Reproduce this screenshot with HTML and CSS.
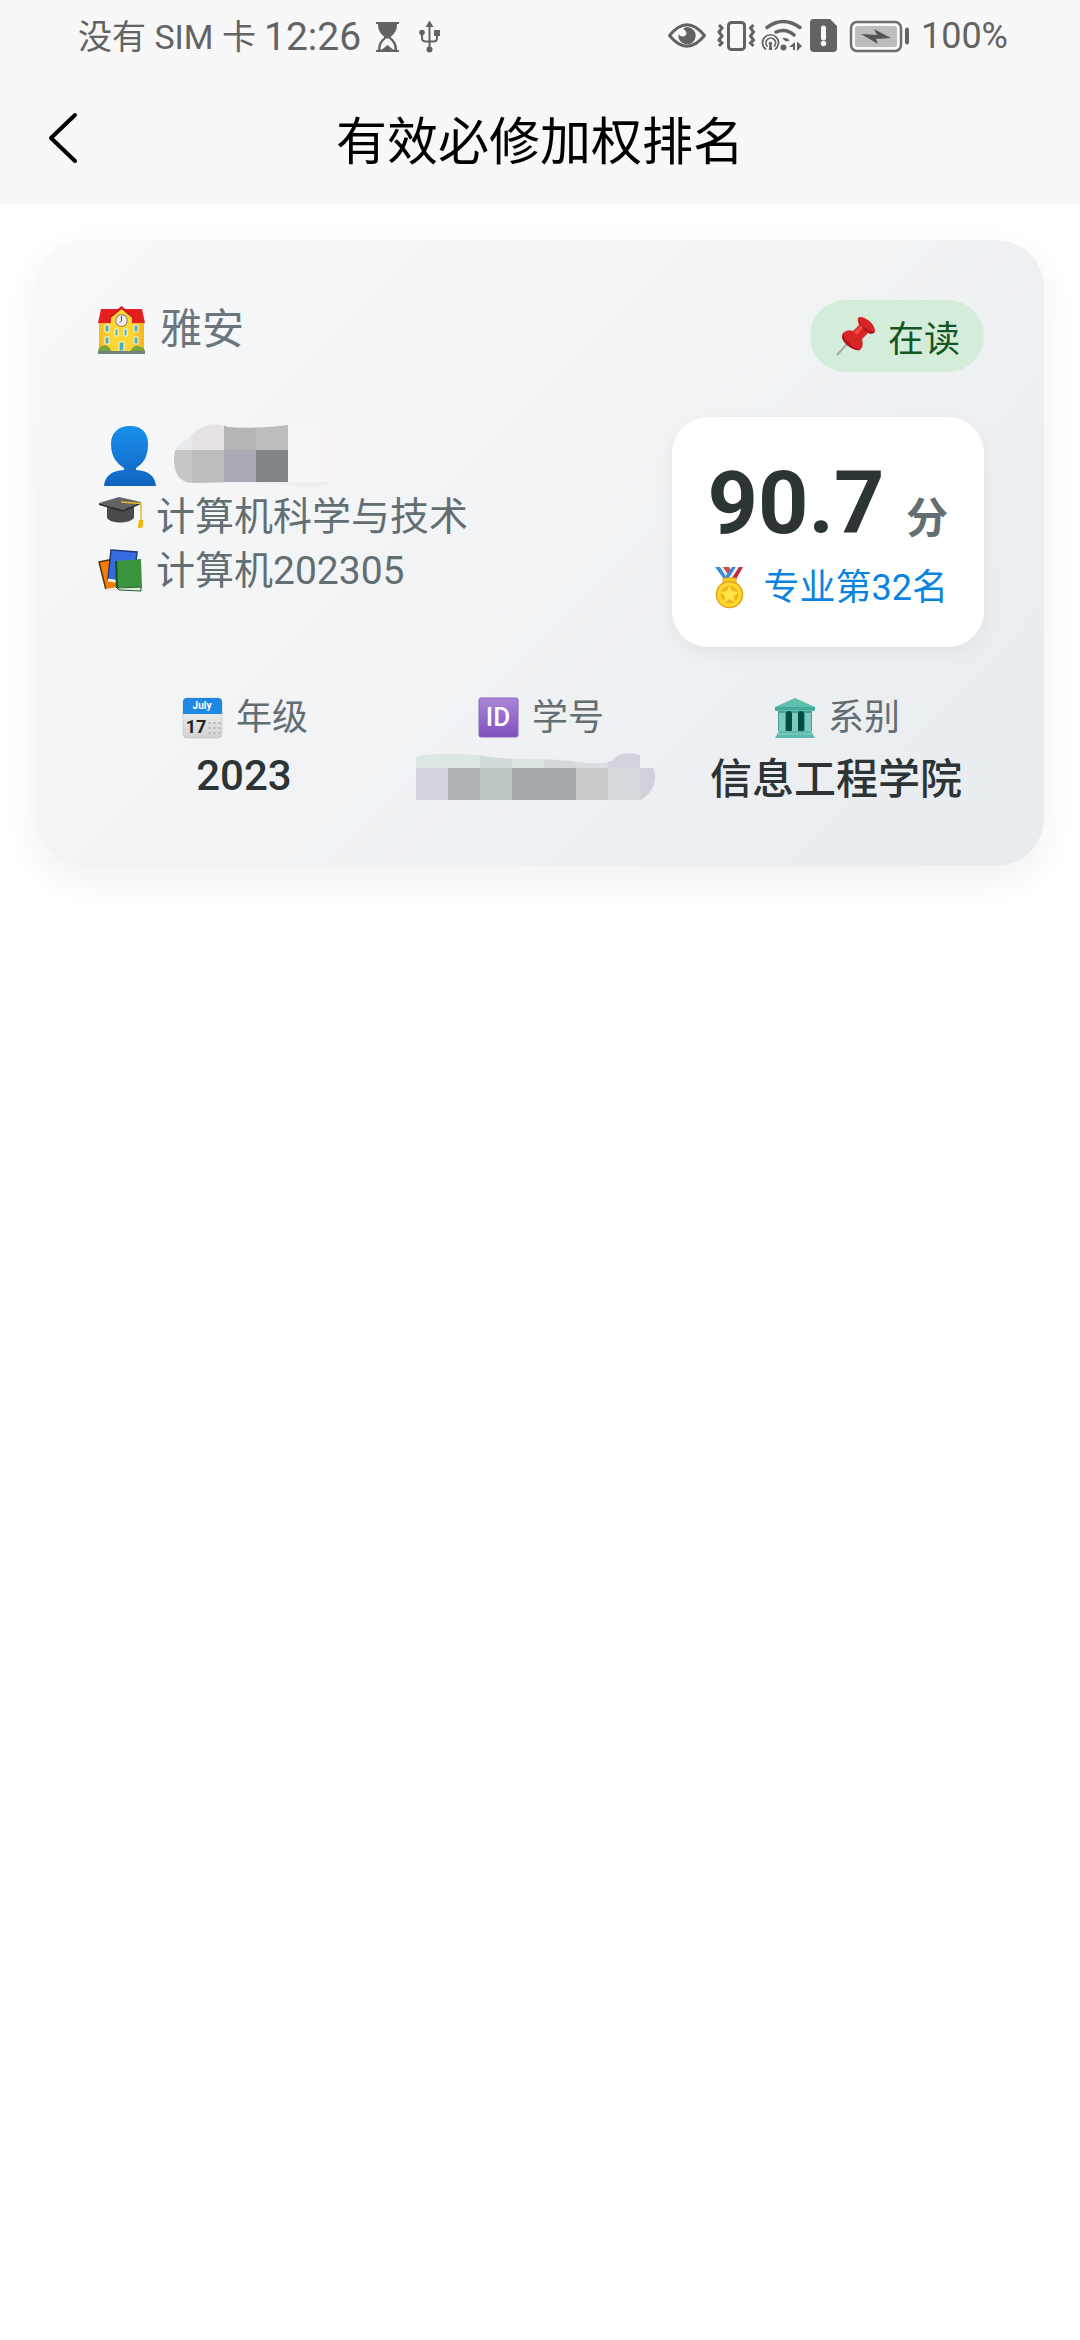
FILE: index.html
```html
<!DOCTYPE html>
<html lang="zh-CN">
<head>
<meta charset="utf-8">
<meta name="viewport" content="width=device-width, initial-scale=1">
<title>有效必修加权排名</title>
<link rel="stylesheet" href="styles.css">
</head>
<body>
<header class="header">
  <div class="status">
    <div class="status-left">
      <span class="carrier">没有 SIM 卡</span>
      <span class="clock">12:26</span>
      <svg class="hourglass" width="26" height="36" viewBox="362 18 26 36" fill="#636363" aria-hidden="true">
        <path d="M363 21h23v2h-2c0 6-2 9-6 12.500v1c4 3.500 6 6.500 6 12.500h2v2h-23v-2h2c0-6 2-9 6-12.500v-1c-4-3.500-6-6.500-6-12.500h-2z"/>
        <path fill="#f8f8f8" d="M367.500 48.500c0-5 2-8 5.500-11h3c3.500 3 5.500 6 5.500 11h-1.500l-5.500-4.500-5.500 4.500z"/>
      </svg>
      <svg width="26" height="36" viewBox="403 18 26 36" fill="#636363" aria-hidden="true">
        <path d="M415.500 19.500l4 6.500h-8z"/><circle cx="415.500" cy="48.500" r="3"/><circle cx="408" cy="31.500" r="2.800"/><path d="M420 29h6v6h-6z"/>
        <path d="M415.500 24v24M408 32v5q0 3.500 4 3.500h7.500q3.500 0 3.500-3.500v-4" fill="none" stroke="#636363" stroke-width="2"/>
      </svg>
    </div>
    <div class="status-right">
      <svg width="45" height="36" viewBox="667 18 45 36" aria-hidden="true">
        <path d="M669.500 35.500Q687 14 704.500 35.500Q687 57 669.500 35.500z" fill="none" stroke="#636363" stroke-width="3" stroke-linejoin="round"/>
        <path d="M687 27a8.700 8.700 0 1 1-8.500 7q2 3 5 2.500q4-1 2.500-5q-1-2-3-2.500q2-2 4-2z" fill="#636363"/>
      </svg>
      <svg width="41" height="36" viewBox="716 18 41 36" fill="none" stroke="#636363" stroke-width="3" aria-hidden="true">
        <rect x="728.500" y="22.500" width="16" height="27" rx="3"/>
        <path d="M719 25l3 3-3 4 3 4-3 4 3 3-3 3M753.500 25l-3 3 3 4-3 4 3 4-3 3 3 3"/>
      </svg>
      <svg width="44" height="36" viewBox="761 18 44 36" fill="none" stroke="#636363" stroke-width="3.500" stroke-linecap="round" aria-hidden="true">
        <path d="M767 27.500q16-12 33 0M776 32q10-4 18 3" />
        <path d="M782 38q5-1 8 2.500l-4 1z" fill="#636363" stroke="none"/>
        <g stroke-width="1.700"><path d="M765.500 49a8 8 0 1 1 10 0M767 46a4.800 4.800 0 1 1 7.500 0"/></g>
        <g fill="#636363" stroke="none"><circle cx="770.500" cy="43.500" r="1.700"/><path d="M769.700 43h1.600l1 7h-3.600z"/><circle cx="783.500" cy="47.500" r="3"/><path d="M789 47l6-5v8h-2v-3zM797 41.500l5 4.500-5 5z"/></g>
      </svg>
      <svg width="36" height="36" viewBox="809 18 36 36" aria-hidden="true">
        <path d="M813 19h17l7 7v22q0 4-4 4h-19q-4 0-4-4v-25q0-4 3-4z" fill="#636363"/>
        <path d="M823.500 28v10" stroke="#f8f8f8" stroke-width="5" stroke-linecap="round"/><circle cx="823.500" cy="43.500" r="2.700" fill="#f8f8f8"/>
      </svg>
      <svg width="68" height="36" viewBox="849 18 68 36" aria-hidden="true">
        <rect x="851" y="22" width="50" height="29" rx="6" fill="none" stroke="#6e6e6e" stroke-width="2.500"/>
        <rect x="855" y="26" width="42" height="21" rx="3" fill="#bdbdbd"/>
        <path d="M861 34l16 1-3-6 17 9-15 1 2 5z" fill="#555"/>
        <path d="M907 29.500v13" stroke="#636363" stroke-width="4" stroke-linecap="round"/>
      </svg>
      <span class="battery">100%</span>
    </div>
  </div>
  <nav class="navbar">
    <button class="back" type="button" aria-label="返回">
      <svg width="32" height="54" viewBox="0 0 32 54" fill="none" stroke="#000" stroke-width="4" stroke-linecap="round" stroke-linejoin="round" aria-hidden="true"><path d="M28 4L4 27l24 23"/></svg>
    </button>
    <h1 class="title cjk">有效必修加权排名</h1>
  </nav>
</header>

<main class="page">
  <section class="card">
    <div class="card-head">
      <div class="campus">
        <svg width="50" height="50" viewBox="0 0 50 50" aria-hidden="true">
          <defs><linearGradient id="wall"><stop offset="0" stop-color="#f5bd20"/><stop offset=".5" stop-color="#ffe94a"/><stop offset="1" stop-color="#f5b51c"/></linearGradient></defs>
          <path d="M3 16h45v30H3z" fill="url(#wall)"/>
          <path d="M5 4h41l3 14H2z" fill="#e41f1f"/>
          <path d="M15 12L25.500 3 36 12v34H15z" fill="#fdd835"/>
          <path d="M14 12L25.500 2.500 37 12" fill="none" stroke="#d31a1a" stroke-width="2.500"/>
          <circle cx="25.500" cy="15.500" r="5.800" fill="#eee" stroke="#a98c74" stroke-width="1.300"/><path d="M25.500 11v5l-2 1.500" stroke="#455" stroke-width="1" fill="none"/>
          <g fill="#4aaec4" stroke="#fff8d0" stroke-width="1"><path d="M9 20h4v7H9zM9 32h4v7H9zM38 20h4v7h-4zM38 32h4v7h-4zM19 24h3v7h-3zM28 24h3v7h-3zM23 37h5v9h-5z"/></g>
          <path d="M2 47q0-5 4-6 6-3 10 6zM34 47q4-9 11-5 4 1 4 5z" fill="#7da33c"/><path d="M2 46h47v3H2z" fill="#72817a"/>
        </svg>
        <span>雅安</span>
      </div>
      <div class="badge cjk">
        <svg width="42" height="42" viewBox="0 0 42 42" aria-hidden="true">
          <path d="M3 40l11-12" stroke="#aaa6ab" stroke-width="2"/>
          <path d="M24 3q3-3 10 2t7 12q-3 3-7 1l-6 6q2 8-2 11-6 1-13-5T9 18q4-4 10-2l6-6q-2-4-1-7z" fill="#d92525"/>
          <path d="M9 18q1 6 7 11t10 6q-6 1-13-5T9 18zM24 3q1 5 6 9t11 5q-4 3-8 0-8-5-9-14z" fill="#a81723"/><path d="M20 17l7-7 2 3-6 7z" fill="#f04a40"/>
        </svg>
        <span>在读</span>
      </div>
    </div>

    <div class="card-body">
      <div class="student">
        <div class="name">
          <svg width="60" height="60" viewBox="0 0 60 60" aria-hidden="true">
            <defs><linearGradient id="bust" x2="0" y2="1"><stop offset="0" stop-color="#188fec"/><stop offset="1" stop-color="#1263c0"/></linearGradient></defs>
            <path d="M30 0c12 0 18 7 18 18 0 12-4 19-12 24v2c13 1 19 6 20 16H4c1-10 7-15 20-16v-2C16 37 11 30 11 18 11 7 18 0 30 0z" fill="url(#bust)"/>
          </svg>
          <svg class="name-mask" width="210" height="64" viewBox="174 422 210 64" role="img" aria-label="姓名已隐藏">
            <defs>
              <clipPath id="nameShape"><path d="M174 458c0-14 6-18 14-21 8-12 24-19 40-12q24 2 60-2h50c20 0 38 6 38 20s-14 24-40 32c-6 12-32 10-50 8-30-3-70-3-94-2-14-1-18-12-18-23z"/></clipPath>
              <linearGradient id="fadeOut"><stop offset="0" stop-color="#f8f4f7"/><stop offset="1" stop-color="#f6f3f6" stop-opacity=".3"/></linearGradient>
            </defs>
            <g clip-path="url(#nameShape)" shape-rendering="crispEdges">
              <path fill="#e8ebee" d="M174 422h18v26h-18z"/><path fill="#c6c6c6" d="M174 448h18v38h-18z"/>
              <path fill="#e6e2e6" d="M192 422h32v26h-32z"/><path fill="#bdbdbd" d="M192 448h32v38h-32z"/>
              <path fill="#b5b5b5" d="M224 422h32v26h-32z"/><path fill="#a9aab4" d="M224 448h32v32h-32z"/>
              <path fill="#bdbdbd" d="M256 422h32v26h-32z"/><path fill="#80868a" d="M256 448h32v32h-32z"/>
              <path fill="#f7f7f8" d="M288 422h32v58h-32z"/><path fill="url(#fadeOut)" d="M320 422h64v58h-64z"/>
              <path fill="#efebef" d="M224 480h110v6H224z"/>
            </g>
          </svg>
        </div>
        <div class="line">
          <svg width="46" height="46" viewBox="0 0 46 46" aria-hidden="true">
            <path d="M9 13v11c4 6 22 6 27 0V13z" fill="#4a4a4a"/><path d="M1 9L21 3l22 5-18 8z" fill="#636363"/><path d="M1 9l24 7v2L1 11zM25 16l18-8v2l-18 8z" fill="#303030"/>
            <path d="M23 8l20 1.500V28" fill="none" stroke="#e9b729" stroke-width="1.500"/><path d="M41 26h4v6q-2 3-5 2z" fill="#f4b400"/>
          </svg>
          <span>计算机科学与技术</span>
        </div>
        <div class="line">
          <svg width="46" height="46" viewBox="0 0 46 46" aria-hidden="true">
            <path d="M1 14l15-3 5 29-13 2z" fill="#f57c00" stroke="#50341b" stroke-width="1.500"/><path d="M7 43l13-1v-3L7 41z" fill="#eee"/>
            <path d="M13 2l26 2-3 30-26-3z" fill="#356de0" stroke="#203b78" stroke-width="1.500"/><path d="M10 32l14 2" stroke="#eee" stroke-width="3"/>
            <path d="M18 13l25-2 1 29-25-1z" fill="#3a943e"/><path d="M18 13l1 27" stroke="#174f20" stroke-width="2"/><path d="M19 40l24-1v4l-22-1z" fill="#ddeed8" stroke="#245b29" stroke-width="1"/>
          </svg>
          <span>计算机202305</span>
        </div>
      </div>

      <div class="score-box">
        <div class="score"><span class="score-value">90.7</span><span class="score-unit">分</span></div>
        <div class="rank">
          <svg width="42" height="42" viewBox="0 0 42 42" aria-hidden="true">
            <path d="M7 0h5l13 15h-7z" fill="#3d91d9"/><path d="M12 0h4l11 14-5 2z" fill="#e8edf2"/><path d="M15 0h6l7 11-3 4z" fill="#d84a4a"/>
            <path d="M24 0h4l-7 13-4-3z" fill="#398bd4"/><path d="M28 0h3l-8 13-3-1z" fill="#eef"/><path d="M31 0h4l-8 14h-5z" fill="#c62838"/>
            <path d="M15 11h13v6H15z" fill="#ffd51f" stroke="#dd9e18"/>
            <circle cx="21.500" cy="27.500" r="13" fill="#ffd92b" stroke="#e6a11a" stroke-width="1.500"/><circle cx="21.500" cy="27.500" r="9" fill="#f3b51f"/>
            <path d="M21.500 18.500l2.700 5.600 6.200.8-4.500 4.300 1.100 6.100-5.500-3-5.500 3 1.100-6.100-4.500-4.300 6.200-.8z" fill="#ffe548"/>
          </svg>
          <span>专业第32名</span>
        </div>
      </div>
    </div>

    <dl class="stats">
      <div class="stat">
        <dt>
          <svg width="42" height="42" viewBox="0 0 42 42" aria-hidden="true">
            <defs><linearGradient id="sheet" x2="0" y2="1"><stop offset="0" stop-color="#fafafa"/><stop offset="1" stop-color="#d2d2d2"/></linearGradient></defs>
            <rect x="1" y="1" width="39" height="40" rx="4" fill="url(#sheet)" stroke="#bbb" stroke-width=".5"/><path d="M1 17V5q0-4 4-4h31q4 0 4 4v12z" fill="#1e88e5"/>
            <text class="cal-month" x="20" y="12">July</text><text class="cal-day" x="14" y="36">17</text>
            <path d="M26.500 26h12M26.500 31h12M26.500 36h12" stroke="#b3b3b3" stroke-width="2" stroke-dasharray="2 3"/>
          </svg>
          <span>年级</span>
        </dt>
        <dd>2023</dd>
      </div>
      <div class="stat">
        <dt>
          <svg width="42" height="42" viewBox="0 0 42 42" aria-hidden="true">
            <defs><linearGradient id="idTile" x2="0" y2="1"><stop offset="0" stop-color="#ab87d6"/><stop offset="1" stop-color="#8050c0"/></linearGradient></defs>
            <rect x="1" y="1" width="39" height="39" rx="2" fill="url(#idTile)" stroke="#8a65bd" stroke-width="1"/><text class="id-text" x="20" y="29">ID</text>
          </svg>
          <span>学号</span>
        </dt>
        <dd>
          <svg class="id-mask" width="248" height="48" viewBox="416 752 248 48" role="img" aria-label="学号已隐藏">
            <defs><clipPath id="idShape"><path d="M416 757c10-4 45-3 62-2q20 4 50 4t50 3 34-1c6-9 18-9 28-6v13h13c4 6 4 22-12 32H416z"/></clipPath></defs>
            <g clip-path="url(#idShape)" shape-rendering="crispEdges">
              <path fill="#dce7e5" d="M416 752h64v16h-64z"/><path fill="#d3dadb" d="M480 752h32v16h-32z"/><path fill="#dbe6e4" d="M512 752h32v16h-32z"/><path fill="#d4d9dc" d="M544 752h32v16h-32z"/><path fill="#dadee1" d="M576 752h32v16h-32z"/><path fill="#d3d3dd" d="M608 752h32v16h-32z"/>
              <path fill="#d4d4de" d="M416 768h32v32h-32z"/><path fill="#abb1b4" d="M448 768h32v32h-32z"/><path fill="#bdc7c5" d="M480 768h32v32h-32z"/><path fill="#a4a9ac" d="M512 768h64v32h-64z"/><path fill="#cdcacd" d="M576 768h32v32h-32z"/><path fill="#d5dbdc" d="M608 768h32v32h-32z"/><path fill="#d3d0da" d="M640 768h16v32h-16z"/>
            </g>
          </svg>
        </dd>
      </div>
      <div class="stat">
        <dt>
          <svg width="42" height="42" viewBox="0 0 42 42" aria-hidden="true">
            <path d="M1 10L21 1l20 9v4H1z" fill="#5fc0b0"/><path d="M4 14h34v20H4z" fill="#43a396"/><path d="M5 16h6v18H5zM18 16h6v18h-6zM31 16h6v18h-6z" fill="#7bc9bf"/>
            <rect x="12" y="14" width="6" height="21" rx="3" fill="#004d40"/><rect x="24" y="14" width="6" height="21" rx="3" fill="#004d40"/>
            <path d="M5 34h32l4 7H1z" fill="#5db9ad"/><path d="M1 10h40v3H1z" fill="#45a89a"/><path d="M3 37h36" stroke="#8bd2c9" stroke-width="1"/>
          </svg>
          <span>系别</span>
        </dt>
        <dd class="cjk">信息工程学院</dd>
      </div>
    </dl>
  </section>
</main>
</body>
</html>
```
FILE: styles.css
```css
* { box-sizing: border-box; }
body {
  margin: 0;
  background: #fff;
  color: #2d3436;
  font-family: Roboto, "Noto Sans CJK SC", sans-serif;
}
svg { display: block; flex: none; }
.cjk { font-family: "Noto Sans CJK SC", sans-serif; }

.header { background: #f8f8f8; }
.status {
  display: flex;
  justify-content: space-between;
  height: 72px;
  padding: 0 72px 0 78px;
  color: #636363;
}
.status-left, .status-right { display: flex; align-items: center; }
.status-left { gap: 8px; padding-top: 2px; }
.status-left .hourglass { margin: 0 8px 0 6px; }
.status-right { gap: 4px; }
.carrier { font-size: 34px; line-height: 48px; }
.clock { font-size: 39px; line-height: 48px; }
.battery { font-size: 36px; line-height: 48px; }

.navbar {
  display: grid;
  grid-template-columns: 96px 1fr 96px;
  align-items: center;
  height: 132px;
}
.back {
  display: flex;
  padding: 0 0 0 47px;
  border: 0;
  background: none;
}
.title {
  margin: 0;
  color: #000;
  font-size: 51px;
  font-weight: 400;
  line-height: 72px;
  text-align: center;
}

.page { padding: 36px; }
.card {
  padding: 60px;
  border-radius: 48px;
  background: linear-gradient(135deg, #f8f9fa, #e9ecef);
  box-shadow: 0 12px 36px rgba(0, 0, 0, 0.06);
}
.card-head {
  display: flex;
  justify-content: space-between;
  align-items: flex-start;
}
.campus {
  display: flex;
  align-items: center;
  gap: 14px;
  color: #6c757d;
  font-size: 42px;
  line-height: 60px;
}
.badge {
  display: flex;
  align-items: center;
  gap: 12px;
  padding: 9px 24px;
  border-radius: 36px;
  background: #d4edda;
  color: #155724;
  font-size: 36px;
  line-height: 54px;
}

.card-body {
  display: flex;
  justify-content: space-between;
  align-items: flex-start;
  margin-top: 45px;
}
.name {
  display: flex;
  align-items: center;
  gap: 14px;
  height: 73px;
  padding: 5px 0 0 4px;
}
.line {
  display: flex;
  align-items: center;
  gap: 12px;
  padding-left: 2px;
  color: #636e72;
  font-size: 39px;
  line-height: 54px;
}
.score-box {
  padding: 36px;
  border-radius: 36px;
  background: #fff;
  box-shadow: 0 6px 18px rgba(0, 0, 0, 0.05);
}
.score {
  display: flex;
  justify-content: space-between;
  align-items: baseline;
  height: 100px;
  font-weight: 700;
  line-height: 100px;
}
.score-value { font-size: 88px; }
.score-unit { color: #636e72; font-size: 42px; }
.rank {
  display: flex;
  align-items: center;
  gap: 14px;
  margin-top: 12px;
  color: #0984e3;
  font-size: 36px;
  line-height: 46px;
}

.stats {
  display: grid;
  grid-template-columns: repeat(3, 1fr);
  margin: 44px 0 0;
}
.stat {
  display: flex;
  flex-direction: column;
  align-items: center;
}
.stat dt {
  display: flex;
  align-items: center;
  gap: 12px;
  padding-left: 2px;
  color: #636e72;
  font-size: 36px;
  line-height: 54px;
}
.stat dd {
  margin: 0;
  padding-top: 1px;
  font-size: 42px;
  font-weight: 500;
  line-height: 60px;
}
.id-mask { margin-top: 6px; }

.cal-month { fill: #fff; font-size: 10px; font-weight: 700; text-anchor: middle; }
.cal-day { fill: #222; font-size: 18px; font-weight: 700; text-anchor: middle; }
.id-text { fill: #fff; font-size: 26px; font-weight: 500; text-anchor: middle; }
```
